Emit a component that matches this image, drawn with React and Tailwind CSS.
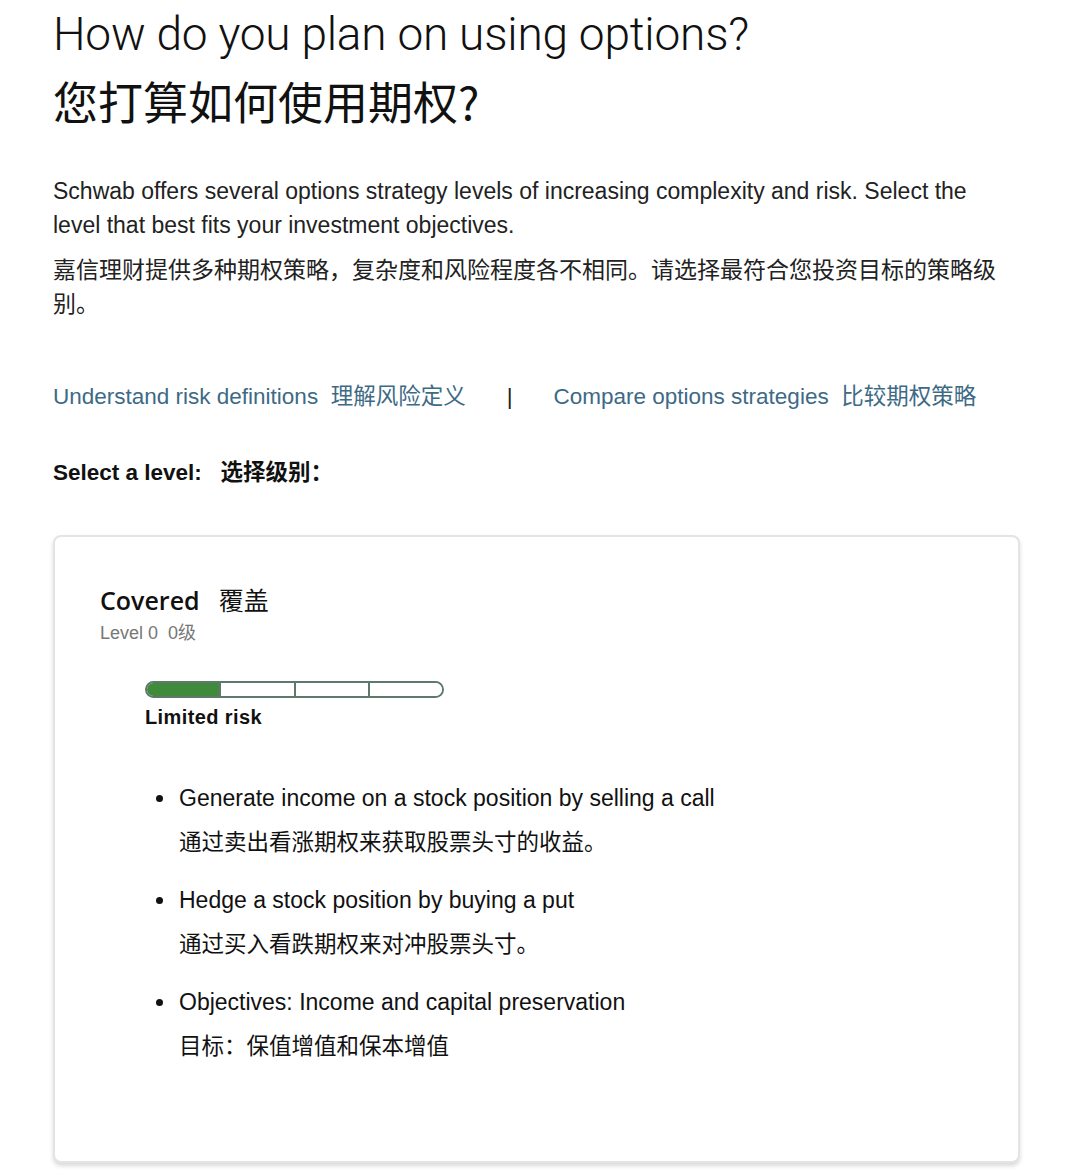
import React from 'react'

const sans = { fontFamily: '"Liberation Sans", "Noto Sans CJK SC", sans-serif' }

const bullets = [
  { en: 'Generate income on a stock position by selling a call', zh: '通过卖出看涨期权来获取股票头寸的收益。' },
  { en: 'Hedge a stock position by buying a put', zh: '通过买入看跌期权来对冲股票头寸。' },
  { en: 'Objectives: Income and capital preservation', zh: '目标：保值增值和保本增值' },
]

function RiskBar({ level = 1 }) {
  return (
    <div className="flex h-[17px] w-[299px] overflow-hidden rounded-full border-2 border-[#5f786c]">
      {[0, 1, 2, 3].map(i => (
        <div
          key={i}
          className={`flex-1 ${i > 0 ? 'border-l-2 border-[#5f786c]' : ''} ${i < level ? 'bg-[#3f8a3b]' : 'bg-white'}`}
        />
      ))}
    </div>
  )
}

export default function App() {
  return (
    <div className="min-h-screen bg-white text-[#111] pl-[53px] pr-[60px]" style={sans}>
      <h1 className="pt-[9px] text-[46px] leading-[50px] font-light tracking-[-0.2px]" style={{ fontFamily: 'Roboto, "Noto Sans CJK SC", sans-serif' }}>
        How do you plan on using options?
      </h1>
      <h1 className="mt-[17px] text-[45px] leading-[50px] font-normal" style={{ fontFamily: '"Noto Sans CJK SC", sans-serif' }}>
        您打算如何使用期权?
      </h1>

      <div className="mt-[48px]">
        <p className="w-[940px] text-[23px] leading-[34px] text-[#222]">
          Schwab offers several options strategy levels of increasing complexity and risk. Select the level that best fits your investment objectives.
        </p>
        <p className="mt-[11px] w-[955px] text-[23px] leading-[34px] text-[#222]">
          嘉信理财提供多种期权策略，复杂度和风险程度各不相同。请选择最符合您投资目标的策略级别。
        </p>
      </div>

      <div className="mt-[59px] flex items-center text-[22.5px] leading-[34px] text-[#3d6a85]">
        <a className="cursor-pointer">Understand risk definitions&nbsp; 理解风险定义</a>
        <span className="mx-[41px] text-[#222]">|</span>
        <a className="cursor-pointer">Compare options strategies&nbsp; 比较期权策略</a>
      </div>

      <div className="mt-[44px] text-[22.5px] leading-[30px] font-bold">
        Select a level:&nbsp;&nbsp; 选择级别：
      </div>

      <div className="mt-[47px] mb-[7px] w-[967px] h-[628px] rounded-[8px] border-2 border-[#e4e4e4] bg-white shadow-[0_3px_4px_rgba(0,0,0,0.15)] pl-[45px] pt-[45px]">
        <div className="flex items-baseline text-[25px] leading-[34px] font-semibold" style={{ fontFamily: '"Open Sans", "Noto Sans CJK SC", sans-serif' }}>
          <span>Covered</span>
          <span className="ml-[19px] font-normal" style={{ fontFamily: '"Noto Sans CJK SC", sans-serif' }}>覆盖</span>
        </div>
        <div className="mt-[3px] text-[18px] leading-[26px] text-[#777]">Level 0&nbsp; 0级</div>

        <div className="mt-[35px] ml-[45px]">
          <RiskBar level={1} />
          <div className="mt-[6px] text-[20px] leading-[26px] font-bold tracking-[0.4px] text-[#111]">Limited risk</div>
        </div>

        <ul className="mt-[51px] ml-[56px] flex flex-col gap-[23px]">
          {bullets.map(b => (
            <li key={b.en} className="relative pl-[23px]">
              <span className="absolute left-0 top-[14px] h-[7px] w-[7px] rounded-full bg-[#111]" />
              <div className="text-[23px] leading-[34px] text-[#111]">{b.en}</div>
              <div className="mt-[11px] text-[22.5px] leading-[34px] text-[#111]">{b.zh}</div>
            </li>
          ))}
        </ul>
      </div>
    </div>
  )
}
